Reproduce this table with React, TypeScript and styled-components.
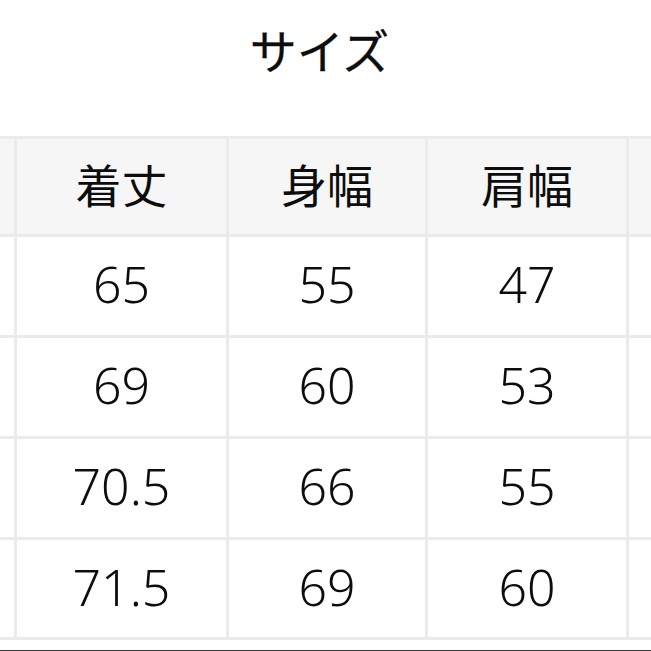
import React from "react";
import styled, { createGlobalStyle } from "styled-components";

const Global = createGlobalStyle`
  html, body {
    margin: 0;
    padding: 0;
    background: #ffffff;
    overflow: hidden;
  }
  body {
    font-family: "Noto Sans CJK JP", "Noto Sans", sans-serif;
    color: #111111;
  }
`;

const Page = styled.div`
  width: 651px;
  height: 651px;
  display: flex;
  flex-direction: column;
  background: #ffffff;
`;

const TitleBar = styled.div`
  height: 136px;
  display: flex;
  justify-content: center;
  align-items: flex-start;
  padding-top: 19px;
  box-sizing: border-box;
`;

const Title = styled.h1`
  margin: 0;
  font-size: 47px;
  font-weight: 400;
  line-height: 60px;
  color: #0d0d0d;
  padding-right: 12px;
  -webkit-text-stroke: 0.3px #0d0d0d;
`;

const Grid = styled.div`
  display: grid;
  grid-template-columns: 14px 209px 196px 198px 1fr;
  grid-template-rows: 95px 98px 98px 98px 97px;
  gap: 3px;
  padding: 3px 0;
  background: #ebebeb;
`;

const Cell = styled.div<{ $head?: boolean }>`
  background: ${(p) => (p.$head ? "#f6f6f6" : "#ffffff")};
  display: flex;
  align-items: center;
  justify-content: center;
  font-family: ${(p) =>
    p.$head ? `"Noto Sans CJK JP", sans-serif` : `"Noto Sans", sans-serif`};
  font-size: ${(p) => (p.$head ? "46px" : "50px")};
  font-weight: ${(p) => (p.$head ? 400 : 300)};
  color: #0d0d0d;
  line-height: 1;
  padding-bottom: ${(p) => (p.$head ? "8px" : "4px")};
  box-sizing: border-box;
  overflow: hidden;
  white-space: nowrap;
`;

const Spacer = styled.div`
  flex: 1;
`;

const BottomEdge = styled.div`
  height: 1px;
  background: #3a3a3a;
`;

const headers = ["着丈", "身幅", "肩幅"];
const rows = [
  ["65", "55", "47"],
  ["69", "60", "53"],
  ["70.5", "66", "55"],
  ["71.5", "69", "60"],
];

export default function App() {
  return (
    <Page>
      <Global />
      <TitleBar>
        <Title>サイズ</Title>
      </TitleBar>
      <Grid>
        <Cell $head />
        {headers.map((h) => (
          <Cell $head key={h}>
            {h}
          </Cell>
        ))}
        <Cell $head />
        {rows.map((r, i) => (
          <React.Fragment key={i}>
            <Cell />
            {r.map((v, j) => (
              <Cell key={j}>{v}</Cell>
            ))}
            <Cell />
          </React.Fragment>
        ))}
      </Grid>
      <Spacer />
      <BottomEdge />
    </Page>
  );
}
